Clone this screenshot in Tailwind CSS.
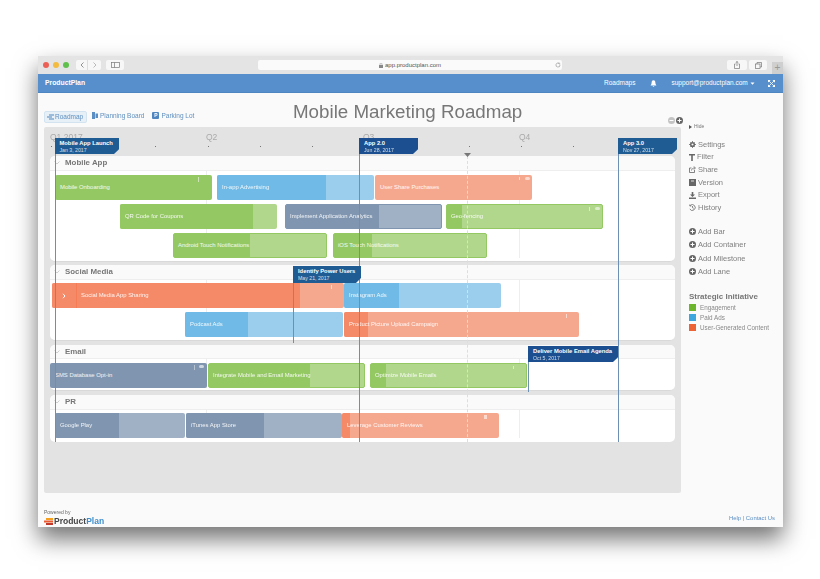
<!DOCTYPE html>
<html><head><meta charset="utf-8"><script src="https://cdn.jsdelivr.net/npm/@tailwindcss/browser@4"></script><title>Mobile Marketing Roadmap</title></head>
<body class="bg-white font-['Liberation_Sans',sans-serif] overflow-hidden">
<div class="w-[820px] h-[579px] pt-[56px] pl-[38px] blur-[0.4px]">
<div class="w-[745px] h-[471px] flex flex-col bg-[#fafafa] shadow-[0_12px_22px_rgba(0,0,0,0.55)]">
  <!-- title bar -->
  <div class="h-[18px] shrink-0 bg-[#e4e4e4] flex items-center relative">
    <span class="ml-[5px] w-[6px] h-[6px] rounded-full bg-[#ec5f56]"></span>
    <span class="ml-[4px] w-[6px] h-[6px] rounded-full bg-[#f3bb3f]"></span>
    <span class="ml-[4px] w-[6px] h-[6px] rounded-full bg-[#5fc04c]"></span>
    <div class="ml-[7px] w-[25px] h-[10px] bg-[#f7f7f7] rounded-[2px] flex text-[#888]">
      <div class="w-[12px] flex items-center justify-center border-r border-[#ddd]"><svg width="4" height="6" viewBox="0 0 4 6" fill="none" stroke="#777" stroke-width=".8"><path d="M3.5.5 1 3l2.5 2.5"/></svg></div>
      <div class="flex-1 flex items-center justify-center"><svg width="4" height="6" viewBox="0 0 4 6" fill="none" stroke="#aaa" stroke-width=".8"><path d="M.5.5 3 3 .5 5.5"/></svg></div>
    </div>
    <div class="ml-[5px] w-[18px] h-[10px] bg-[#f7f7f7] rounded-[2px] flex items-center justify-center"><svg width="9" height="6" viewBox="0 0 9 6" fill="none" stroke="#777" stroke-width=".7"><rect x=".5" y=".5" width="8" height="5"/><path d="M3.5.5v5"/></svg></div>
    <div class="ml-[134px] w-[304px] h-[10px] bg-[#fafafa] rounded-[2px] flex items-center justify-center relative text-[6px] text-[#555]">
      <svg class="mr-[2px]" width="4" height="5" viewBox="0 0 4 5" fill="#888"><rect y="2" width="4" height="3"/><path d="M1 2V1a1 1 0 0 1 2 0v1" fill="none" stroke="#888" stroke-width=".5"/></svg>app.productplan.com
      <svg class="absolute right-[1px] top-[2px]" width="6" height="6" viewBox="0 0 6 6" fill="none" stroke="#888" stroke-width=".6"><path d="M5 3a2 2 0 1 1-1-1.7M4 .5V2h1.300"/></svg>
    </div>
    <div class="ml-[165px] w-[20px] h-[10px] bg-[#f7f7f7] rounded-[2px] flex items-center justify-center"><svg width="6" height="8" viewBox="0 0 6 8" fill="none" stroke="#777" stroke-width=".7"><path d="M1.5 3H.5v4.500h5V3h-1M3 5V.5M1.700 1.700 3 .5l1.300 1.200"/></svg></div>
    <div class="ml-[2px] w-[18px] h-[10px] bg-[#f7f7f7] rounded-[2px] flex items-center justify-center"><svg width="7" height="7" viewBox="0 0 7 7" fill="none" stroke="#777" stroke-width=".7"><rect x=".5" y="2" width="4.500" height="4.500"/><path d="M2 2V.5h4.500V5H5"/></svg></div>
    <div class="absolute right-0 bottom-0 w-[11px] h-[12px] bg-[#cfcfcf] text-[#999] text-[10px] leading-[12px] text-center">+</div>
  </div>
  <!-- nav -->
  <div class="h-[19px] shrink-0 bg-[#568fcb] border-b border-[#4d86c1] flex items-center text-white text-[6.5px] pl-[7px]">
    <span class="font-bold text-[6.8px] w-[40px]">ProductPlan</span>
    <span class="ml-[519px]">Roadmaps</span>
    <svg class="ml-[15px]" width="7" height="7" viewBox="0 0 7 7" fill="#fff"><path d="M3.5.3C2 .3 1.600 1.500 1.600 3 1.600 4.300.8 4.800.6 5.400h5.800C6.200 4.800 5.400 4.300 5.400 3 5.400 1.500 5 .3 3.500.3zM2.700 5.900a.8.8 0 0 0 1.600 0z"/></svg>
    <span class="ml-[14px]">support@productplan.com</span>
    <svg class="ml-[2px]" width="5" height="3" viewBox="0 0 5 3" fill="#fff"><path d="M.5.5h4L2.500 2.800z"/></svg>
    <svg class="ml-[13px]" width="7" height="7" viewBox="0 0 7 7" fill="#fff" stroke="#fff" stroke-width=".8"><path d="M1 1l5 5M6 1 1 6" /><path d="M0 0h2.200L0 2.200zM7 0v2.200L4.800 0zM0 7V4.800L2.200 7zM7 7H4.800L7 4.800z"/></svg>
  </div>
  <!-- content -->
  <div class="flex-1 flex min-h-0">
    <div class="w-[651px] shrink-0 pl-[6px] flex flex-col">
      <div class="h-[34px] shrink-0 relative flex items-start pt-[18px] text-[6.5px] text-[#5f8fbf]">
        <div class="flex items-center h-[12px] w-[43px] rounded-[2px] bg-[#e7f0f7] border border-[#d3e3ef] pl-[2px]">
          <svg class="mr-[1px]" width="7" height="6" viewBox="0 0 7 6" fill="none" stroke="#4f86bd"><path d="M2 1h5M0 3h5M2 5h5"/></svg>Roadmap</div>
        <div class="ml-[5px] flex items-center">
          <svg class="mr-[2px]" width="6" height="7" viewBox="0 0 6 7" fill="#5b8fc4"><path d="M0 0h3v7H0zM3.500 1.500H6V6H3.500z"/></svg>Planning Board</div>
        <div class="ml-[8px] flex items-center">
          <div class="w-[7px] h-[7px] bg-[#4f86c0] rounded-[1px] mr-[2px] text-[5px] leading-[7px] text-white text-center font-bold">P</div>Parking Lot</div>
        <h1 class="absolute left-[249px] top-[7px] text-[#777] text-[18.75px] leading-[24px] font-normal whitespace-nowrap">Mobile Marketing Roadmap</h1>
        <svg class="absolute left-[624px] top-[24px]" width="7" height="7" viewBox="0 0 7 7"><circle cx="3.5" cy="3.5" r="3.5" fill="#c4c4c4"/><path d="M1.500 3h4v1h-4z" fill="#fff"/></svg>
        <svg class="absolute left-[632px] top-[24px]" width="7" height="7" viewBox="0 0 7 7"><circle cx="3.5" cy="3.5" r="3.5" fill="#666"/><path d="M1.500 3h4v1h-4zM3 1.500h1v4H3z" fill="#fff"/></svg>
      </div>
      <!-- board -->
      <div class="relative w-[637px] h-[366px] shrink-0 bg-[#e3e3e3] rounded-[2px] px-[6px]">
        <div class="h-[29px] relative text-[8.5px] text-[#aaa]">
          <div class="flex pt-[4px]">
            <span class="w-[156px]">Q1 2017</span><span class="w-[157px]">Q2</span><span class="w-[156px]">Q3</span><span>Q4</span>
          </div>
          <div class="absolute left-[1px] top-[19px] flex">
            <span class="w-[52.2px]"><span class="block w-[1px] h-[1px] bg-[#777]"></span></span><span class="w-[52.2px]"><span class="block w-[1px] h-[1px] bg-[#777]"></span></span><span class="w-[52.2px]"><span class="block w-[1px] h-[1px] bg-[#777]"></span></span><span class="w-[52.2px]"><span class="block w-[1px] h-[1px] bg-[#777]"></span></span><span class="w-[52.2px]"><span class="block w-[1px] h-[1px] bg-[#777]"></span></span><span class="w-[52.2px]"><span class="block w-[1px] h-[1px] bg-[#777]"></span></span><span class="w-[52.2px]"><span class="block w-[1px] h-[1px] bg-[#777]"></span></span><span class="w-[52.2px]"><span class="block w-[1px] h-[1px] bg-[#777]"></span></span><span class="w-[52.2px]"><span class="block w-[1px] h-[1px] bg-[#777]"></span></span><span class="w-[52.2px]"><span class="block w-[1px] h-[1px] bg-[#777]"></span></span><span class="w-[52.2px]"><span class="block w-[1px] h-[1px] bg-[#777]"></span></span><span class="w-[52.2px]"><span class="block w-[1px] h-[1px] bg-[#777]"></span></span>
          </div>
        </div>

        <!-- Lane: Mobile App -->
        <section class="h-[106px] w-[625px] bg-white rounded-[5px] border-b border-[#d9d9d9]">
          <div class="h-[15px] bg-[#fafafa] border-b border-[#eee] rounded-t-[5px] flex items-center pl-[4px] text-[#777] font-bold text-[7.9px]"><svg class="mr-[5px]" width="6" height="4" viewBox="0 0 6 4" fill="none" stroke="#bbb" stroke-width=".7"><path d="m.5.5 2.500 2.500L5.500.5"/></svg>Mobile App</div>
          <div class="relative pt-[4px] flex flex-col gap-[4px]">
            <i class="absolute left-[156px] inset-y-0 w-px bg-[#eee]"></i><i class="absolute left-[469px] inset-y-0 w-px bg-[#eee]"></i>
            <div class="relative h-[25px]">
              <div class="absolute left-[5px] w-[157px] h-full rounded-[2px] bg-[#93c862] text-white/90 text-[5.9px] leading-[25px] pl-[5px] whitespace-nowrap">Mobile Onboarding<span class="absolute right-[13px] top-[2px] w-[1.5px] h-[5px] bg-[#cfe5b8]"></span></div>
              <div class="absolute left-[167px] w-[157px] h-full rounded-[2px] bg-[#9bcdec] overflow-hidden"><div class="absolute inset-y-0 left-0 w-[109px] bg-[#6fbae6]"></div><div class="relative text-white/90 text-[5.9px] leading-[25px] pl-[5px] whitespace-nowrap">In-app Advertising</div></div>
              <div class="absolute left-[325px] w-[157px] h-full rounded-[2px] bg-[#f6a88f] text-white/90 text-[5.9px] leading-[25px] pl-[5px] whitespace-nowrap">User Share Purchases<span class="absolute right-[12px] top-[2px] w-[1.5px] h-[3px] bg-[#fbd9cd]"></span><span class="absolute right-[2px] top-[2px] w-[5px] h-[3px] rounded-full bg-[#fbd9cd]"></span></div>
            </div>
            <div class="relative h-[25px]">
              <div class="absolute left-[70px] w-[157px] h-full rounded-[2px] bg-[#b1d78c] overflow-hidden"><div class="absolute inset-y-0 left-0 w-[133px] bg-[#93c862]"></div><div class="relative text-white/90 text-[5.9px] leading-[25px] pl-[5px] whitespace-nowrap">QR Code for Coupons</div></div>
              <div class="absolute left-[235px] w-[157px] h-full rounded-[2px] bg-[#a0b1c6] border border-[#7f95b0] overflow-hidden"><div class="absolute inset-y-0 left-0 w-[93px] bg-[#7f95b0]"></div><div class="relative text-white/90 text-[5.9px] leading-[23px] pl-[4px] whitespace-nowrap">Implement Application Analytics</div></div>
              <div class="absolute left-[396px] w-[157px] h-full rounded-[2px] bg-[#b1d78c] border border-[#93c862]"><div class="absolute inset-y-0 left-0 w-[15px] bg-[#93c862]"></div><div class="relative text-white/90 text-[5.9px] leading-[23px] pl-[4px] whitespace-nowrap">Geo-fencing</div><span class="absolute right-[12px] top-[2px] w-[1.5px] h-[4px] bg-[#dcedca]"></span><span class="absolute right-[2px] top-[2px] w-[5px] h-[3px] rounded-full bg-[#dcedca]"></span></div>
            </div>
            <div class="relative h-[25px]">
              <div class="absolute left-[123px] w-[154px] h-full rounded-[2px] bg-[#b1d78c] border border-[#93c862]"><div class="absolute inset-y-0 left-0 w-[76px] bg-[#93c862]"></div><div class="relative text-white/90 text-[5.9px] leading-[23px] pl-[4px] whitespace-nowrap">Android Touch Notifications</div></div>
              <div class="absolute left-[283px] w-[154px] h-full rounded-[2px] bg-[#b1d78c] border border-[#93c862]"><div class="absolute inset-y-0 left-0 w-[38px] bg-[#93c862]"></div><div class="relative text-white/90 text-[5.9px] leading-[23px] pl-[4px] whitespace-nowrap">iOS Touch Notifications</div></div>
            </div>
          </div>
        </section>

        <!-- Lane: Social Media -->
        <section class="mt-[3px] h-[76px] w-[625px] bg-white rounded-[5px] border-b border-[#d9d9d9]">
          <div class="h-[15px] bg-[#fafafa] border-b border-[#eee] rounded-t-[5px] flex items-center pl-[4px] text-[#777] font-bold text-[7.9px]"><svg class="mr-[5px]" width="6" height="4" viewBox="0 0 6 4" fill="none" stroke="#bbb" stroke-width=".7"><path d="m.5.5 2.500 2.500L5.500.5"/></svg>Social Media</div>
          <div class="relative pt-[3px] flex flex-col gap-[4px]">
            <i class="absolute left-[156px] inset-y-0 w-px bg-[#eee]"></i><i class="absolute left-[469px] inset-y-0 w-px bg-[#eee]"></i>
            <div class="relative h-[25px]">
              <div class="absolute left-[2px] w-[292px] h-full rounded-[2px] bg-[#f6a88f] overflow-hidden"><div class="absolute inset-y-0 left-0 w-[248px] bg-[#f58a68]"></div><div class="relative h-full flex items-center text-white/90 text-[5.9px] whitespace-nowrap"><span class="w-[25px] h-full border-r border-[#f47d58] flex items-center justify-center"><svg width="4" height="6" viewBox="0 0 4 6" fill="none" stroke="#fff" stroke-width="1"><path d="m1 .8 2 2.200-2 2.200"/></svg></span><span class="ml-[4px]">Social Media App Sharing</span></div><span class="absolute right-[12px] top-[2px] w-[1.5px] h-[4px] bg-[#fbd9cd]"></span></div>
              <div class="absolute left-[294px] w-[157px] h-full rounded-[2px] bg-[#9bcdec] overflow-hidden"><div class="absolute inset-y-0 left-0 w-[55px] bg-[#6fbae6]"></div><div class="relative text-white/90 text-[5.9px] leading-[25px] pl-[5px] whitespace-nowrap">Instagram Ads</div></div>
            </div>
            <div class="relative h-[25px]">
              <div class="absolute left-[135px] w-[158px] h-full rounded-[2px] bg-[#9bcdec] overflow-hidden"><div class="absolute inset-y-0 left-0 w-[63px] bg-[#6fbae6]"></div><div class="relative text-white/90 text-[5.9px] leading-[25px] pl-[5px] whitespace-nowrap">Podcast Ads</div></div>
              <div class="absolute left-[294px] w-[235px] h-full rounded-[2px] bg-[#f6a88f] overflow-hidden"><div class="absolute inset-y-0 left-0 w-[24px] bg-[#f58a68]"></div><div class="relative text-white/90 text-[5.9px] leading-[25px] pl-[5px] whitespace-nowrap">Product Picture Upload Campaign</div><span class="absolute right-[12px] top-[2px] w-[1.5px] h-[4px] bg-[#fbd9cd]"></span></div>
            </div>
          </div>
        </section>

        <!-- Lane: Email -->
        <section class="mt-[4px] h-[46px] w-[625px] bg-white rounded-[5px] border-b border-[#d9d9d9]">
          <div class="h-[14px] bg-[#fafafa] border-b border-[#eee] rounded-t-[5px] flex items-center pl-[4px] text-[#777] font-bold text-[7.9px]"><svg class="mr-[5px]" width="6" height="4" viewBox="0 0 6 4" fill="none" stroke="#bbb" stroke-width=".7"><path d="m.5.5 2.500 2.500L5.500.5"/></svg>Email</div>
          <div class="relative pt-[4px]">
            <i class="absolute left-[156px] inset-y-0 w-px bg-[#eee]"></i><i class="absolute left-[469px] inset-y-0 w-px bg-[#eee]"></i>
            <div class="relative h-[25px]">
              <div class="absolute left-0 w-[157px] h-full rounded-[2px] bg-[#7f95b0] text-white/90 text-[5.9px] leading-[25px] pl-[5px] whitespace-nowrap">SMS Database Opt-in<span class="absolute right-[12px] top-[2px] w-[1.5px] h-[5px] bg-[#b5c2d1]"></span><span class="absolute right-[3px] top-[2px] w-[5px] h-[3px] rounded-full bg-[#cdd6e1]"></span></div>
              <div class="absolute left-[158px] w-[157px] h-full rounded-[2px] bg-[#b1d78c] border border-[#93c862]"><div class="absolute inset-y-0 left-0 w-[101px] bg-[#93c862]"></div><div class="relative text-white/90 text-[5.9px] leading-[23px] pl-[4px] whitespace-nowrap">Integrate Mobile and Email Marketing</div></div>
              <div class="absolute left-[320px] w-[157px] h-full rounded-[2px] bg-[#b1d78c] border border-[#93c862]"><div class="absolute inset-y-0 left-0 w-[15px] bg-[#93c862]"></div><div class="relative text-white/90 text-[5.9px] leading-[23px] pl-[4px] whitespace-nowrap">Optimize Mobile Emails</div><span class="absolute right-[12px] top-[2px] w-[1.5px] h-[3px] bg-[#dcedca]"></span></div>
            </div>
          </div>
        </section>

        <!-- Lane: PR -->
        <section class="mt-[4px] h-[47px] w-[625px] bg-white rounded-[5px]">
          <div class="h-[15px] bg-[#fafafa] border-b border-[#eee] rounded-t-[5px] flex items-center pl-[4px] text-[#777] font-bold text-[7.9px]"><svg class="mr-[5px]" width="6" height="4" viewBox="0 0 6 4" fill="none" stroke="#bbb" stroke-width=".7"><path d="m.5.5 2.500 2.500L5.500.5"/></svg>PR</div>
          <div class="relative pt-[3px]">
            <i class="absolute left-[156px] inset-y-0 w-px bg-[#eee]"></i><i class="absolute left-[469px] inset-y-0 w-px bg-[#eee]"></i>
            <div class="relative h-[25px]">
              <div class="absolute left-[5px] w-[130px] h-full rounded-[2px] bg-[#a0b1c6] overflow-hidden"><div class="absolute inset-y-0 left-0 w-[64px] bg-[#7f95b0]"></div><div class="relative text-white/90 text-[5.9px] leading-[25px] pl-[5px] whitespace-nowrap">Google Play</div></div>
              <div class="absolute left-[136px] w-[156px] h-full rounded-[2px] bg-[#a0b1c6] overflow-hidden"><div class="absolute inset-y-0 left-0 w-[78px] bg-[#7f95b0]"></div><div class="relative text-white/90 text-[5.9px] leading-[25px] pl-[5px] whitespace-nowrap">iTunes App Store</div></div>
              <div class="absolute left-[292px] w-[157px] h-full rounded-[2px] bg-[#f6a88f] overflow-hidden"><div class="absolute inset-y-0 left-0 w-[8px] bg-[#f58a68]"></div><div class="relative text-white/90 text-[5.9px] leading-[25px] pl-[5px] whitespace-nowrap">Leverage Customer Reviews</div><span class="absolute right-[12px] top-[2px] w-[3px] h-[4px] bg-[#fbd9cd]"></span></div>
            </div>
          </div>
        </section>

        <!-- milestone and today lines, over the bars -->
        <i class="absolute left-[423px] top-[29px] h-[286px] border-l border-dashed border-[#f6d5cb]"></i>
        <svg class="absolute left-[420px] top-[26px]" width="7" height="4" viewBox="0 0 7 4" fill="#777"><path d="M0 0h7L3.500 4z"/></svg>
        <i class="absolute left-[11px] top-[11px] h-[304px] w-px bg-[#6c8fb3]"></i>
        <i class="absolute left-[315px] top-[11px] h-[304px] w-px bg-[#6c8fb3]"></i>
        <i class="absolute left-[574px] top-[11px] h-[304px] w-px bg-[#6c8fb3]"></i>
        <i class="absolute left-[249px] top-[139px] h-[77px] w-px bg-[#6c8fb3]"></i>
        <i class="absolute left-[484px] top-[219px] h-[46px] w-px bg-[#6c8fb3]"></i>

        <div class="absolute left-[11px] top-[11px] w-[64px] h-[16px] bg-[#1f5c94] text-white pl-[4.5px] [clip-path:polygon(0_0,100%_0,100%_70%,calc(100%-5px)_100%,0_100%)]"><div class="font-bold text-[5.8px] leading-[8px] pt-[1px] whitespace-nowrap">Mobile App Launch</div><div class="text-[5.2px] leading-[6px] opacity-80 whitespace-nowrap">Jan 3, 2017</div></div>
        <div class="absolute left-[315px] top-[11px] w-[59px] h-[16px] bg-[#1b4f8f] text-white pl-[5px] [clip-path:polygon(0_0,100%_0,100%_70%,calc(100%-5px)_100%,0_100%)]"><div class="font-bold text-[5.8px] leading-[8px] pt-[1px]">App 2.0</div><div class="text-[5.2px] leading-[6px] opacity-80 whitespace-nowrap">Jun 28, 2017</div></div>
        <div class="absolute left-[574px] top-[11px] w-[59px] h-[16px] bg-[#1f5c94] text-white pl-[5px] [clip-path:polygon(0_0,100%_0,100%_70%,calc(100%-5px)_100%,0_100%)]"><div class="font-bold text-[5.8px] leading-[8px] pt-[1px]">App 3.0</div><div class="text-[5.2px] leading-[6px] opacity-80 whitespace-nowrap">Nov 27, 2017</div></div>
        <div class="absolute left-[249px] top-[139px] w-[68px] h-[17px] bg-[#1f5c94] text-white pl-[5px] [clip-path:polygon(0_0,100%_0,100%_70%,calc(100%-5px)_100%,0_100%)]"><div class="font-bold text-[5.8px] leading-[8px] pt-[1px] whitespace-nowrap">Identify Power Users</div><div class="text-[5.2px] leading-[6px] opacity-80 whitespace-nowrap">May 21, 2017</div></div>
        <div class="absolute left-[484px] top-[219px] w-[90px] h-[16px] bg-[#1b4f8f] text-white pl-[5px] [clip-path:polygon(0_0,100%_0,100%_70%,calc(100%-5px)_100%,0_100%)]"><div class="font-bold text-[5.8px] leading-[8px] pt-[1px] whitespace-nowrap">Deliver Mobile Email Agenda</div><div class="text-[5.2px] leading-[6px] opacity-80 whitespace-nowrap">Oct 5, 2017</div></div>
      </div>
      <!-- footer left -->
      <div class="pt-[16px]">
        <div class="text-[5px] leading-[6px] text-[#666]">Powered by</div>
        <div class="flex items-center mt-[1px]">
          <svg class="mr-[1px]" width="9" height="7" viewBox="0 0 9 7"><path d="M2 0h7v2H2z" fill="#f5a020"/><path d="M0 2.500h9v2H0z" fill="#ec5a30"/><path d="M2 5h7v2H2z" fill="#c0392b"/></svg>
          <span class="font-bold text-[8.5px] leading-[10px] text-[#444]">Product</span><span class="font-bold text-[8.5px] leading-[10px] text-[#3f8ecb]">Plan</span>
        </div>
      </div>
    </div>
    <!-- sidebar -->
    <aside class="flex-1 flex flex-col relative text-[7.5px] text-[#808080]">
      <div class="flex items-center h-[8px] mt-[30px] text-[5px] text-[#777]"><svg class="mr-[2px]" width="3" height="4" viewBox="0 0 3 4" fill="#555"><path d="M0 0l3 2-3 2z"/></svg>Hide</div>
      <div class="mt-[7px] flex flex-col">
        <div class="h-[12.7px] flex items-center"><svg class="mr-[2px]" width="7" height="7" viewBox="0 0 7 7" fill="none" stroke="#666" stroke-width="1.500"><circle cx="3.500" cy="3.500" r="1.800"/><path stroke-width=".8" d="M3.500 0v1M3.500 6v1M0 3.500h1M6 3.500h1M1 1l.7.7M5.300 5.300 6 6M6 1l-.7.7M1.700 5.300 1 6"/></svg>Settings</div>
        <div class="h-[12.7px] flex items-center"><svg class="mr-[2px]" width="6" height="7" viewBox="0 0 6 7" fill="#666"><path d="M0 0h6v1.500H3.800V7H2.200V1.500H0z"/></svg>Filter</div>
        <div class="h-[12.7px] flex items-center"><svg class="mr-[2px]" width="7" height="7" viewBox="0 0 7 7" fill="none" stroke="#666" stroke-width=".8"><path d="M5.500 4v2.500H.5V2h2M2.500 4.500C2.800 2.700 4 2 5.500 2M4.700.5 6.500 2 4.700 3.500"/></svg>Share</div>
        <div class="h-[12.7px] flex items-center"><svg class="mr-[2px]" width="7" height="7" viewBox="0 0 7 7" fill="#666"><path d="M0 0h7v7H0z"/><path d="M2 1.500h3v1H2z" fill="#ddd"/></svg>Version</div>
        <div class="h-[12.7px] flex items-center"><svg class="mr-[2px]" width="7" height="7" viewBox="0 0 7 7" fill="#666"><path d="M2.700 0h1.600v2.500H6L3.500 5 1 2.500h1.700zM0 5.500h7V7H0z"/></svg>Export</div>
        <div class="h-[12.7px] flex items-center"><svg class="mr-[2px]" width="7" height="7" viewBox="0 0 7 7" fill="none" stroke="#666" stroke-width=".8"><path d="M1.200 1.500A2.900 2.900 0 1 1 .8 5M.8.500V2h1.500M3.500 2v1.700l1.200.6"/></svg>History</div>
      </div>
      <div class="mt-[10.5px] flex flex-col">
        <div class="h-[13.5px] flex items-center"><svg class="mr-[2px]" width="7" height="7" viewBox="0 0 7 7"><circle cx="3.5" cy="3.5" r="3.5" fill="#666"/><path d="M1.500 3h4v1h-4zM3 1.500h1v4H3z" fill="#fff"/></svg>Add Bar</div>
        <div class="h-[13.5px] flex items-center"><svg class="mr-[2px]" width="7" height="7" viewBox="0 0 7 7"><circle cx="3.5" cy="3.5" r="3.5" fill="#666"/><path d="M1.500 3h4v1h-4zM3 1.500h1v4H3z" fill="#fff"/></svg>Add Container</div>
        <div class="h-[13.5px] flex items-center"><svg class="mr-[2px]" width="7" height="7" viewBox="0 0 7 7"><circle cx="3.5" cy="3.5" r="3.5" fill="#666"/><path d="M1.500 3h4v1h-4zM3 1.500h1v4H3z" fill="#fff"/></svg>Add Milestone</div>
        <div class="h-[13.5px] flex items-center"><svg class="mr-[2px]" width="7" height="7" viewBox="0 0 7 7"><circle cx="3.5" cy="3.5" r="3.5" fill="#666"/><path d="M1.500 3h4v1h-4zM3 1.500h1v4H3z" fill="#fff"/></svg>Add Lane</div>
      </div>
      <div class="mt-[13px] font-bold text-[8px] leading-[10px] text-[#777]">Strategic Initiative</div>
      <div class="mt-[1px] flex flex-col text-[6.3px] text-[#888]">
        <div class="h-[10px] flex items-center"><span class="w-[7px] h-[7px] bg-[#6cb52d] mr-[4px]"></span>Engagement</div>
        <div class="h-[10px] flex items-center"><span class="w-[7px] h-[7px] bg-[#3ea6de] mr-[4px]"></span>Paid Ads</div>
        <div class="h-[10px] flex items-center"><span class="w-[7px] h-[7px] bg-[#ee6336] mr-[4px]"></span>User-Generated Content</div>
      </div>
      <div class="mt-auto mb-[4px] pr-[8px] text-right text-[5.9px] text-[#5b8fc4]">Help | Contact Us</div>
    </aside>
  </div>
</div>
</div>
</body></html>
